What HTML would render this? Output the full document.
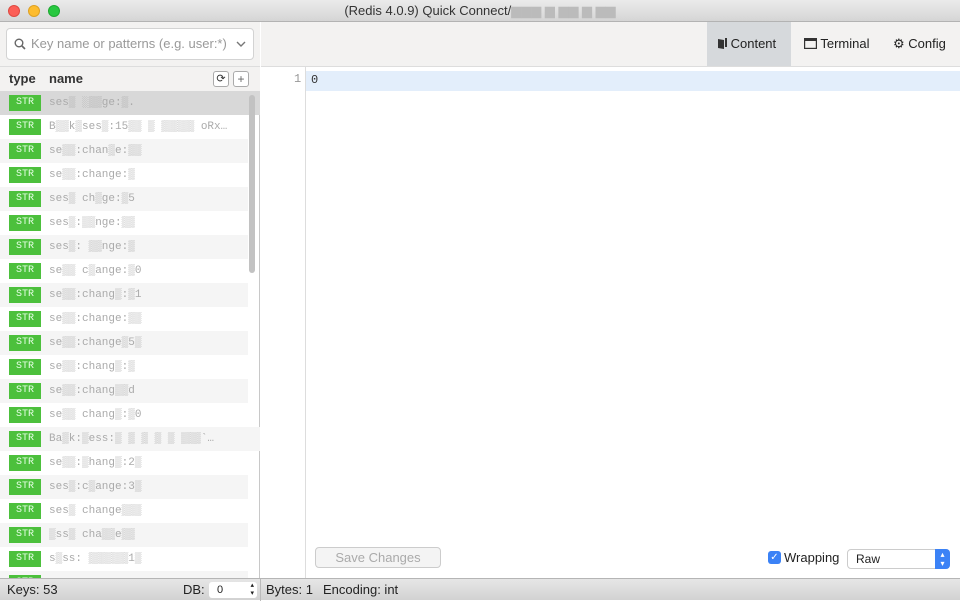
<!DOCTYPE html>
<html><head><style>
*{box-sizing:border-box;margin:0;padding:0}
body{width:960px;height:600px;overflow:hidden;font-family:"Liberation Sans",sans-serif;font-size:13px;background:#fff;position:relative;color:#222}
.abs{position:absolute}
#title{left:0;top:0;width:960px;height:22px;background:linear-gradient(#ebebeb,#d5d5d5);border-bottom:1px solid #b3b3b3;text-align:center;line-height:22px;font-size:13px;color:#333}
.dot{top:5px;width:12px;height:12px;border-radius:50%}
#left{left:0;top:22px;width:260px;height:556px;background:#fff;border-right:1px solid #c8c8c8}
#search{left:0;top:22px;width:260px;height:45px;background:#f3f2f1;border-bottom:1px solid #ddd}
#sbox{left:6px;top:28px;width:248px;height:32px;background:#fff;border:1px solid #d3d3d3;border-radius:4px;color:#999;font-size:13px;line-height:30px;padding-left:24px}
#hdr{left:0;top:67px;width:260px;height:24px;background:#f3f2f1;font-weight:bold;font-size:13px;color:#333;line-height:24px}
.row{left:0;width:248px;height:24px;font-family:"Liberation Mono",monospace;font-size:11px;color:#aaa;line-height:24px}
.badge{position:absolute;display:flex;align-items:center;justify-content:center;left:9px;top:4px;width:32px;height:16px;background:#4cc03c;color:#e8ffe8;font-size:10px;line-height:10px}
.nm{position:absolute;left:49px;top:0}
#tb{left:261px;top:22px;width:699px;height:45px;background:#f3f2f1;border-bottom:1px solid #ddd}
.tab{top:22px;height:44px;line-height:44px;font-size:13px;color:#222}
#status{left:0;top:578px;width:960px;height:22px;background:linear-gradient(#e6e6e6,#d2d2d2);border-top:1px solid #b5b5b5;line-height:21px;font-size:13px;color:#222}
</style></head><body>
<div id="title" class="abs">(Redis 4.0.9) Quick Connect/<span style="color:#bbb">▆▆▆ ▆ ▆▆ ▆ ▆▆</span></div>
<div class="abs dot" style="left:8px;background:#fc5f57;border:1px solid #de4a42"></div>
<div class="abs dot" style="left:28px;background:#fdbc2e;border:1px solid #dea123"></div>
<div class="abs dot" style="left:48px;background:#28c840;border:1px solid #1ea931"></div>

<div id="left" class="abs"></div>
<div id="search" class="abs"></div>
<div id="sbox" class="abs">Key name or patterns (e.g. user:*)
<svg class="abs" style="left:7px;top:9px" width="12" height="12"><circle cx="5" cy="5" r="3.8" fill="none" stroke="#666" stroke-width="1.4"/><line x1="8" y1="8" x2="11" y2="11" stroke="#666" stroke-width="1.6"/></svg>
<svg class="abs" style="left:229px;top:11px" width="10" height="8"><path d="M1 2l4 4 4-4" fill="none" stroke="#777" stroke-width="1.4"/></svg></div>
<div id="hdr" class="abs"><span class="abs" style="left:9px">type</span><span class="abs" style="left:49px">name</span>
<div class="abs" style="left:213px;top:4px;width:16px;height:16px;border:1px solid #aaa;border-radius:3px;background:#fff;font-size:11px;line-height:14px;text-align:center;font-weight:normal">⟳</div>
<div class="abs" style="left:233px;top:4px;width:16px;height:16px;border:1px solid #aaa;border-radius:3px;background:#fff;font-size:12px;line-height:14px;text-align:center;font-weight:normal;color:#666">+</div></div>

<div class="abs row" style="top:91px;background:#d8d8d8;width:260px"><span class="badge">STR</span><span class="nm">ses▒ ░▒▒ge:▒.</span></div>
<div class="abs row" style="top:115px"><span class="badge">STR</span><span class="nm">B▒▒k▒ses▒:15▒▒ ▒ ▒▒▒▒▒ oRx…</span></div>
<div class="abs row" style="top:139px;background:#f5f5f5"><span class="badge">STR</span><span class="nm">se▒▒:chan▒e:▒▒</span></div>
<div class="abs row" style="top:163px"><span class="badge">STR</span><span class="nm">se▒▒:change:▒</span></div>
<div class="abs row" style="top:187px;background:#f5f5f5"><span class="badge">STR</span><span class="nm">ses▒ ch▒ge:▒5</span></div>
<div class="abs row" style="top:211px"><span class="badge">STR</span><span class="nm">ses▒:▒▒nge:▒▒</span></div>
<div class="abs row" style="top:235px;background:#f5f5f5"><span class="badge">STR</span><span class="nm">ses▒: ▒▒nge:▒</span></div>
<div class="abs row" style="top:259px"><span class="badge">STR</span><span class="nm">se▒▒ c▒ange:▒0</span></div>
<div class="abs row" style="top:283px;background:#f5f5f5"><span class="badge">STR</span><span class="nm">se▒▒:chang▒:▒1</span></div>
<div class="abs row" style="top:307px"><span class="badge">STR</span><span class="nm">se▒▒:change:▒▒</span></div>
<div class="abs row" style="top:331px;background:#f5f5f5"><span class="badge">STR</span><span class="nm">se▒▒:change▒5▒</span></div>
<div class="abs row" style="top:355px"><span class="badge">STR</span><span class="nm">se▒▒:chang▒:▒</span></div>
<div class="abs row" style="top:379px;background:#f5f5f5"><span class="badge">STR</span><span class="nm">se▒▒:chang▒▒d</span></div>
<div class="abs row" style="top:403px"><span class="badge">STR</span><span class="nm">se▒▒ chang▒:▒0</span></div>
<div class="abs row" style="top:427px;background:#f5f5f5;width:260px"><span class="badge">STR</span><span class="nm">Ba▒k:▒ess:▒ ▒ ▒   ▒ ▒ ▒▒▒`…</span></div>
<div class="abs row" style="top:451px"><span class="badge">STR</span><span class="nm">se▒▒:▒hang▒:2▒</span></div>
<div class="abs row" style="top:475px;background:#f5f5f5"><span class="badge">STR</span><span class="nm">ses▒:c▒ange:3▒</span></div>
<div class="abs row" style="top:499px"><span class="badge">STR</span><span class="nm">ses▒ change▒▒▒</span></div>
<div class="abs row" style="top:523px;background:#f5f5f5"><span class="badge">STR</span><span class="nm">▒ss▒ cha▒▒e▒▒</span></div>
<div class="abs row" style="top:547px"><span class="badge">STR</span><span class="nm">s▒ss: ▒▒▒▒▒▒1▒</span></div>
<div class="abs row" style="top:571px;height:7px;overflow:hidden;background:#f5f5f5"><span class="badge">STR</span></div>
<div class="abs" style="left:249px;top:95px;width:6px;height:178px;background:#c2c2c2;border-radius:3px"></div>

<div id="tb" class="abs"></div>
<div class="abs tab" style="left:707px;width:84px;background:#d6d9dc;padding-left:11px"><svg width="9" height="11" style="vertical-align:-1px"><path d="M0 1l6 1v9l-6-1z" fill="#333"/><path d="M7 0h2v9h-2z" fill="#333"/></svg> Content</div>
<div class="abs tab" style="left:804px"><svg width="13" height="11" style="vertical-align:-1px"><rect x="0.6" y="0.6" width="11.8" height="9.8" fill="none" stroke="#333" stroke-width="1.2"/><rect x="0" y="0" width="13" height="3" fill="#333"/></svg> Terminal</div>
<div class="abs tab" style="left:893px"><span style="font-size:13px">⚙</span> Config</div>

<div class="abs" style="left:261px;top:67px;width:45px;height:511px;background:#fff;border-right:1px solid #ddd"></div>
<div class="abs" style="left:294px;top:72px;font-family:'Liberation Mono',monospace;font-size:12px;color:#999">1</div>
<div class="abs" style="left:306px;top:71px;width:654px;height:20px;background:#e3eefb;font-family:'Liberation Mono',monospace;font-size:12px;line-height:19px;padding-left:5px;color:#333">0</div>

<div class="abs" style="left:315px;top:547px;width:126px;height:21px;border:1px solid #ccc;border-radius:4px;background:#f4f4f4;color:#aaa;text-align:center;line-height:19px">Save Changes</div>
<div class="abs" style="left:768px;top:551px;width:13px;height:13px;background:#3b82f6;border-radius:3px;color:#fff;font-size:10px;line-height:13px;text-align:center">✓</div>
<div class="abs" style="left:784px;top:550px;font-size:13px">Wrapping</div>
<div class="abs" style="left:847px;top:549px;width:103px;height:20px;border:1px solid #ccc;border-radius:4px;background:#fff;font-size:12px;line-height:18px;padding-left:8px">Raw</div>
<div class="abs" style="left:935px;top:549px;width:15px;height:20px;background:#3b82f6;border-radius:0 4px 4px 0;color:#fff;font-size:8px;line-height:9px;text-align:center;padding-top:1px">▴<br>▾</div>

<div id="status" class="abs">
<span class="abs" style="left:7px">Keys: 53</span>
<span class="abs" style="left:183px">DB:</span>
<div class="abs" style="left:209px;top:3px;width:48px;height:16px;background:#fff;border-radius:3px;font-size:11px;line-height:16px;padding-left:8px">0<span class="abs" style="right:3px;top:0;font-size:7px;line-height:8px">▴<br>▾</span></div>
<div class="abs" style="left:260px;top:0;width:1px;height:22px;background:#bbb"></div>
<span class="abs" style="left:266px">Bytes: 1</span>
<span class="abs" style="left:323px">Encoding: int</span>
</div>
</body></html>
